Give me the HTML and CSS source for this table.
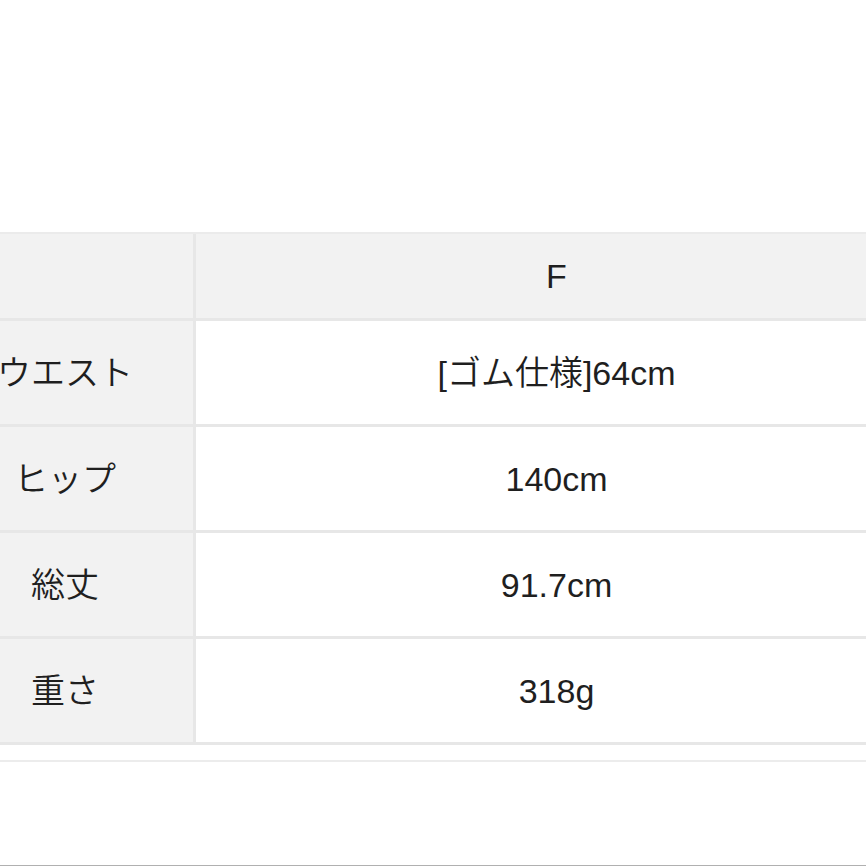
FILE: index.html
```html
<!DOCTYPE html>
<html lang="ja">
<head>
<meta charset="utf-8">
<title>サイズ表</title>
<link rel="stylesheet" href="styles.css">
</head>
<body>
<div class="page">
  <div class="spec">
    <div class="cell label head"></div>
    <div class="cell head value">F</div>
    <div class="cell label">ウエスト</div>
    <div class="cell value">[ゴム仕様]64cm</div>
    <div class="cell label">ヒップ</div>
    <div class="cell value">140cm</div>
    <div class="cell label">総丈</div>
    <div class="cell value">91.7cm</div>
    <div class="cell label">重さ</div>
    <div class="cell value">318g</div>
  </div>
  <div class="rule"></div>
  <div class="bottom-rule"></div>
</div>
</body>
</html>
```

FILE: styles.css
```css
html, body {
  margin: 0;
  padding: 0;
  background: #ffffff;
}
body {
  width: 866px;
  height: 866px;
  overflow: hidden;
  font-family: "Liberation Sans", "Noto Sans CJK JP", sans-serif;
  color: #1f1f1f;
}
.page {
  padding-top: 232px;
}
.spec {
  display: grid;
  grid-template-columns: 256px 721px;
  grid-template-rows: 84px 103px 103px 103px 103px;
  gap: 3px;
  margin-left: -63px;
  width: 980px;
  background: #e7e7e7;
  border-top: 2px solid #ebebeb;
  border-bottom: 3px solid #e7e7e7;
}
.cell {
  display: flex;
  align-items: center;
  justify-content: center;
  font-size: 34px;
  font-weight: 350;
  line-height: 1;
  background: #ffffff;
}
.label, .head {
  background: #f2f2f2;
}
.rule {
  margin-top: 15px;
  height: 2px;
  background: #ececec;
}
.bottom-rule {
  margin-top: 103px;
  height: 1px;
  background: #b0b0b0;
}
```
